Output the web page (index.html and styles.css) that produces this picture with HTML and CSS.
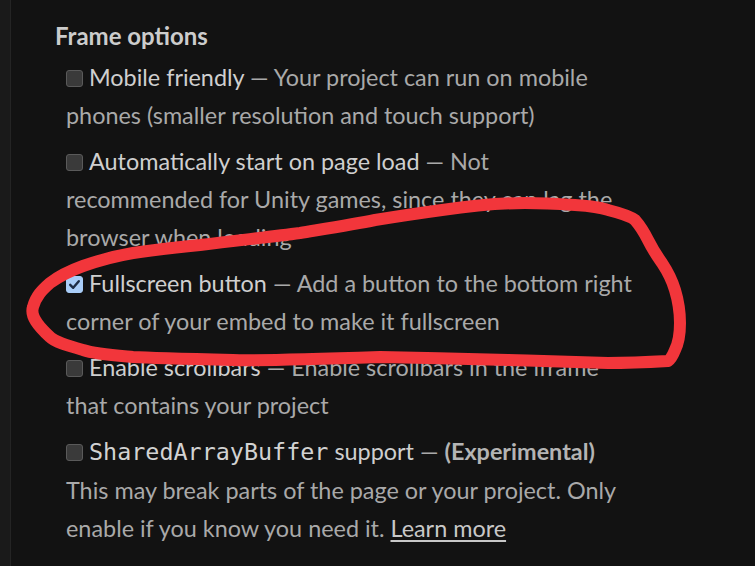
FILE: index.html
```html
<!DOCTYPE html>
<html>
<head>
<meta charset="utf-8">
<link rel="stylesheet" href="styles.css">
</head>
<body>
<div class="page">
  <div class="strip"></div>
  <div class="content">
    <h2 class="heading">Frame options</h2>
    <div class="options">
      <div class="option">
        <span class="box"></span><span class="label">Mobile friendly</span> <span class="desc">— Your project can run on mobile phones (smaller resolution and touch support)</span>
      </div>
      <div class="option">
        <span class="box"></span><span class="label">Automatically start on page load</span> <span class="desc">— Not recommended for Unity games, since they can lag the browser when loading</span>
      </div>
      <div class="option">
        <span class="box checked"><svg viewBox="0 0 17 17" width="17" height="17"><path d="M4.2 8.8 L7.2 11.8 L12.8 5.2" fill="none" stroke="#1d2c45" stroke-width="2.4" stroke-linecap="round" stroke-linejoin="round"/></svg></span><span class="label">Fullscreen button</span> <span class="desc">— Add a button to the bottom right corner of your embed to make it fullscreen</span>
      </div>
      <div class="option">
        <span class="box"></span><span class="label">Enable scrollbars</span> <span class="desc">— Enable scrollbars in the iframe that contains your project</span>
      </div>
      <div class="option">
        <span class="box"></span><span class="label"><code class="mono">SharedArrayBuffer</code> support</span> <span class="desc">— <strong>(Experimental)</strong> This may break parts of the page or your project. Only enable if you know you need it. <a class="link" href="#">Learn more</a></span>
      </div>
    </div>
  </div>
  <svg class="scribble" width="755" height="566" viewBox="0 0 755 566">
    <path d="M380 357 C320 359 260 361 233 360 C190 359 150 358 133 357 C110 355 95 354 83 350 C65 345 55 342 50 337 C38 326 30 316 33 307 C36 296 42 290 50 283 C62 274 72 270 83 266 C100 260 115 256 133 253 C160 249 180 247 200 245 C240 240 270 237 300 233 C330 228 355 224 375 220 C400 216 420 213 442 210 C470 206 500 203 525 203 C545 203 560 204 575 205 C590 206 600 207 608 210 C620 213 630 216 635 220 C642 228 645 234 648 240 C653 250 657 256 662 263 C668 272 672 280 675 290 C678 300 680 312 680 323 C680 334 678 344 675 350 C673 355 671 359 668 361 C650 362 630 363 608 363 C570 362 540 361 508 360 C470 359 420 358 380 357 Z" fill="none" stroke="#f2363b" stroke-width="12" stroke-linecap="round" stroke-linejoin="round"/>
  </svg>
</div>
</body>
</html>
```
FILE: styles.css
```css
html, body {
  margin: 0;
  padding: 0;
  background: #121212;
}
.page {
  position: relative;
  display: flex;
  width: 755px;
  height: 566px;
  overflow: hidden;
  background: #121212;
  font-family: Lato, "Noto Sans", sans-serif;
}
.strip {
  width: 10px;
  flex: none;
  background: #1a1a1a;
  border-right: 1px solid #242424;
}
.content {
  padding: 20px 0 0 44px;
}
.heading {
  margin: 0 0 6px 0;
  font-size: 24px;
  line-height: 32px;
  font-weight: 700;
  color: #cccccc;
}
.options {
  padding-left: 11px;
  width: 572px;
}
.option {
  font-size: 23.4px;
  line-height: 38px;
  margin-bottom: 8px;
  color: #a9a9a9;
}
.box {
  display: inline-block;
  box-sizing: border-box;
  width: 17px;
  height: 17px;
  margin-right: 6px;
  vertical-align: -1px;
  background: #3a3a3a;
  border: 1px solid #5a5a5a;
  border-radius: 3px;
}
.box.checked {
  background: #a9cdf8;
  border-color: #a9cdf8;
  position: relative;
}
.box.checked svg {
  position: absolute;
  left: -1px;
  top: -1px;
}
.label {
  color: #cfcfcf;
}
.mono {
  font-family: "DejaVu Sans Mono", monospace;
  font-size: 23.4px;
  color: #d2d2d2;
}
.desc strong {
  font-weight: 700;
  color: #b4b4b4;
}
.link {
  color: #c8c8c8;
  text-decoration: underline;
  text-underline-offset: 3px;
}
.scribble {
  position: absolute;
  left: 0;
  top: 0;
  pointer-events: none;
}
```
